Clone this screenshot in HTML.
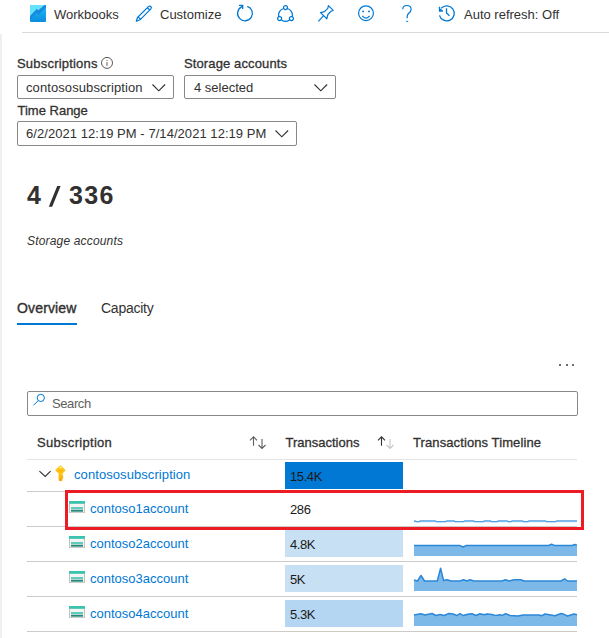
<!DOCTYPE html>
<html><head><meta charset="utf-8">
<style>
*{margin:0;padding:0;box-sizing:border-box}
html,body{width:609px;height:638px;overflow:hidden;background:#fff}
body{position:relative;font-family:"Liberation Sans",sans-serif;color:#323130}
.a{position:absolute;white-space:nowrap;line-height:1}
.t13{font-size:13px}
.b12{font-size:13px;-webkit-text-stroke:0.3px currentColor}
svg{position:absolute;overflow:visible}
.dd{position:absolute;border:1px solid #8a8886;border-radius:2px;height:24px}
.sep{position:absolute;left:27px;width:550px;height:1px;background:#cdcbc9}
.bar{position:absolute;left:285px;width:118px;height:27px}
.lnk{color:#0078d4}
</style></head><body>

<!-- toolbar -->
<svg style="left:30px;top:5px" width="16" height="17" viewBox="0 0 16 17">
  <defs>
    <linearGradient id="wg" x1="0" y1="0" x2="0" y2="1">
      <stop offset="0" stop-color="#1cc0f4"/><stop offset="1" stop-color="#0b8ce0"/>
    </linearGradient>
  </defs>
  <rect x="0" y="0" width="16" height="17" rx="1" fill="url(#wg)"/>
  <path d="M1 0H15L8.5 5.2L6.6 4.3L0 11.2V1Z" fill="#66e3fc"/>
  <path d="M0 11.2L6.6 4.3L8.5 5.2L14.6 0H15A1 1 0 0 1 16 1V2.5L8.4 9.8L6.5 7.8L0 14.5Z" fill="#1a88df"/>
</svg>
<div class="a t13" style="left:54px;top:8px">Workbooks</div>

<svg style="left:135px;top:5px" width="18" height="17" viewBox="0 0 18 17" fill="none" stroke="#0078d4" stroke-width="1.2" stroke-linejoin="round">
  <path d="M1.3 16.3L2.5 12.5L13.4 1.6A1.7 1.7 0 0 1 15.9 3.9L5 14.8Z"/>
  <path d="M12.3 2.7L14.8 5M3.1 11.9L5.6 14.2"/>
</svg>
<div class="a t13" style="left:160px;top:8px">Customize</div>

<svg style="left:237px;top:5px" width="17" height="17" viewBox="0 0 17 17" fill="none" stroke="#0078d4" stroke-width="1.3">
  <path d="M10.3 1.36A7.4 7.4 0 1 1 4.53 1.87L5.5 0.9"/>
  <path d="M2 0.3H5.7V4"/>
</svg>

<svg style="left:277px;top:5px" width="17" height="17" viewBox="0 0 17 17" fill="none" stroke="#0078d4" stroke-width="1.2">
  <circle cx="8.5" cy="2.6" r="2"/>
  <circle cx="2.6" cy="13.6" r="2"/>
  <circle cx="14.4" cy="13.6" r="2"/>
  <path d="M6.6 3.5A7 7 0 0 0 1.7 11.8"/>
  <path d="M10.4 3.5A7 7 0 0 1 15.3 11.8"/>
  <path d="M4.5 15A7 7 0 0 0 12.5 15"/>
</svg>

<svg style="left:318px;top:5px" width="16" height="17" viewBox="0 0 16 17" fill="none" stroke="#0078d4" stroke-width="1.2" stroke-linejoin="round">
  <path d="M5.4 10.9L0.4 16.3"/>
  <path d="M10.4 0.6L15.2 5.4L13.1 6.1L9.9 9.5L8.8 13.8L2.5 7.6L6.6 6.6L9.8 3.3Z"/>
</svg>

<svg style="left:358px;top:5px" width="16" height="17" viewBox="0 0 16 17" fill="none" stroke="#0078d4" stroke-width="1.2">
  <circle cx="8" cy="8.2" r="7.4"/>
  <path d="M4.3 10.9Q8 15.3 11.7 10.9"/>
  <ellipse cx="5.1" cy="6.4" rx="1" ry="0.85" fill="#0078d4" stroke="none"/>
  <ellipse cx="11" cy="6.4" rx="1" ry="0.85" fill="#0078d4" stroke="none"/>
</svg>

<svg style="left:402px;top:5px" width="10" height="17" viewBox="0 0 10 17" fill="none" stroke="#0078d4" stroke-width="1.2">
  <path d="M0.8 4.2Q0.8 0.5 4.8 0.5Q9.1 0.5 9.1 4.2Q9.1 6.3 7 8Q5.2 9.6 5.2 11.2V13.2"/>
  <rect x="4.2" y="15.9" width="2" height="1" fill="#0078d4" stroke="none"/>
</svg>

<svg style="left:438px;top:5px" width="17" height="17" viewBox="0 0 17 17" fill="none" stroke="#0078d4" stroke-width="1.3">
  <path d="M3.25 3.25A7.5 7.5 0 1 1 1.46 10.34"/>
  <path d="M1.5 1.8V6H5M1.8 5.7L3.4 4"/>
  <path d="M8.5 3.3V7.9L11.5 10.7"/>
</svg>
<div class="a t13" style="left:464px;top:8px">Auto refresh: Off</div>

<div style="position:absolute;left:22px;top:32px;width:587px;height:1px;background:#d9d9d9"></div>
<div style="position:absolute;left:0;top:34px;width:2px;height:604px;background:#efefef"></div>

<!-- params -->
<div class="a b12" style="left:17px;top:57px;letter-spacing:0.2px">Subscriptions</div>
<svg style="left:100px;top:56px" width="14" height="14" viewBox="0 0 14 14" fill="none" stroke="#5a5856" stroke-width="1">
  <circle cx="7" cy="6.9" r="5.5"/>
  <path d="M7 6.1V9.8"/>
  <circle cx="7" cy="4.5" r="0.6" fill="#5a5856" stroke="none"/>
</svg>
<div class="dd" style="left:17px;top:75px;width:157px"></div>
<div class="a t13" style="left:26px;top:81px;letter-spacing:0.09px">contososubscription</div>
<svg style="left:151.6px;top:83.9px" width="14" height="8" viewBox="0 0 14 8" fill="none" stroke="#323130" stroke-width="1.15"><path d="M0.5 0.5L6.8 6.8L13.1 0.5"/></svg>

<div class="a b12" style="left:184px;top:57px;letter-spacing:0.12px">Storage accounts</div>
<div class="dd" style="left:184px;top:75px;width:152px"></div>
<div class="a t13" style="left:194px;top:81px">4 selected</div>
<svg style="left:313.6px;top:83.9px" width="14" height="8" viewBox="0 0 14 8" fill="none" stroke="#323130" stroke-width="1.15"><path d="M0.5 0.5L6.8 6.8L13.1 0.5"/></svg>

<div class="a b12" style="left:17.5px;top:104px">Time Range</div>
<div class="dd" style="left:17px;top:121px;width:280px;height:25px"></div>
<div class="a t13" style="left:26px;top:127px;letter-spacing:0.05px">6/2/2021 12:19 PM - 7/14/2021 12:19 PM</div>
<svg style="left:274.6px;top:129.9px" width="14" height="8" viewBox="0 0 14 8" fill="none" stroke="#323130" stroke-width="1.15"><path d="M0.5 0.5L6.8 6.8L13.1 0.5"/></svg>

<!-- big number -->
<div class="a" style="left:27px;top:183px;font-size:25px;font-weight:bold">4</div>
<svg style="left:0;top:0" width="609" height="638"><path d="M48.8 206.8H52.2L60.6 185.9H57.2Z" fill="#323130"/></svg>
<div class="a" style="left:69px;top:183px;font-size:25px;font-weight:bold;letter-spacing:1.3px">336</div>
<div class="a" style="left:27px;top:235px;font-size:12px;font-style:italic;letter-spacing:0.17px">Storage accounts</div>

<!-- tabs -->
<div class="a" style="left:17px;top:301px;font-size:14px;-webkit-text-stroke:0.4px currentColor;letter-spacing:0.15px">Overview</div>
<div style="position:absolute;left:17px;top:323px;width:60px;height:2px;background:#0078d4"></div>
<div class="a" style="left:101px;top:301px;font-size:14px;letter-spacing:-0.25px">Capacity</div>

<!-- dots -->
<div style="position:absolute;left:559px;top:364px;width:2px;height:2px;background:#6e6c6a"></div>
<div style="position:absolute;left:566px;top:364px;width:2px;height:2px;background:#6e6c6a"></div>
<div style="position:absolute;left:572px;top:364px;width:2px;height:2px;background:#6e6c6a"></div>

<!-- search -->
<div class="dd" style="left:27px;top:391px;width:551px;height:25px"></div>
<svg style="left:33px;top:393px" width="12" height="14" viewBox="0 0 12 14" fill="none" stroke="#0078d4" stroke-width="1">
  <circle cx="7.8" cy="4.9" r="3.6"/>
  <path d="M5.2 7.6L0.6 12.3"/>
</svg>
<div class="a t13" style="left:52px;top:397px;color:#605e5c;letter-spacing:-0.4px">Search</div>

<!-- header -->
<div class="a b12" style="left:37px;top:436px;letter-spacing:0.3px">Subscription</div>
<div class="a b12" style="left:285.5px;top:436px">Transactions</div>
<div class="a b12" style="left:413px;top:436px;letter-spacing:0.1px">Transactions Timeline</div>

<!-- sort arrows -->
<svg style="left:249px;top:436px" width="18" height="13" viewBox="0 0 18 13" fill="none" stroke="#605e5c" stroke-width="1.1">
  <path d="M4.5 0.8V9.8M1 4.3L4.5 0.8L8 4.3"/>
  <path d="M13 3V12.5M9.5 9L13 12.5L16.5 9"/>
</svg>
<svg style="left:377px;top:436px" width="18" height="13" viewBox="0 0 18 13" fill="none" stroke-width="1.1">
  <path d="M4.5 0.8V9.8M1 4.3L4.5 0.8L8 4.3" stroke="#323130"/>
  <path d="M13 3V12.5M9.5 9L13 12.5L16.5 9" stroke="#c8c6c4"/>
</svg>

<div class="sep" style="top:459px;background:#e6e4e2"></div>
<div class="sep" style="top:491px"></div>
<div class="sep" style="top:526px"></div>
<div class="sep" style="top:561px"></div>
<div class="sep" style="top:596px"></div>
<div class="sep" style="top:631px"></div>

<!-- row A -->
<svg style="left:39px;top:470px" width="13" height="8" viewBox="0 0 13 8" fill="none" stroke="#323130" stroke-width="1.1"><path d="M0.4 1.2L6.2 6.5L11.6 1.2"/></svg>
<svg style="left:55px;top:465px" width="11" height="16" viewBox="0 0 11 16">
  <defs><linearGradient id="kg" x1="0" y1="0" x2="0" y2="1"><stop offset="0" stop-color="#ffcc22"/><stop offset="0.55" stop-color="#ffc20f"/><stop offset="1" stop-color="#f9a600"/></linearGradient></defs>
  <path d="M5.4 1.1L9.8 5.2L6.9 8.3V10.4L7.7 11L6.9 11.7L7.7 12.4L6.9 13.1V15L5.5 15.6L4.3 15V8.3L1 5.2Z" fill="url(#kg)" stroke="url(#kg)" stroke-width="1.3" stroke-linejoin="round"/>
  <circle cx="5.4" cy="2.5" r="0.85" fill="#fff6d8"/>
  <rect x="3.2" y="5" width="4.6" height="1.3" fill="#f6a500" opacity="0.5"/>
</svg>
<div class="a t13 lnk" style="left:74px;top:468px;letter-spacing:0.08px">contososubscription</div>
<div class="bar" style="top:462px;background:#0078d4"></div>
<div class="a t13" style="left:290px;top:470px;color:#1b1a19;letter-spacing:-0.4px">15.4K</div>

<svg style="left:69px;top:501px" width="16" height="12" viewBox="0 0 16 12">
  <rect x="0" y="2.5" width="16" height="9.5" fill="#c4c2c0"/>
  <rect x="1" y="2.5" width="14" height="8.7" fill="#f4f4f4"/>
  <rect x="0" y="0" width="16" height="2.8" fill="#3bc3ae"/>
  <rect x="2" y="6.2" width="12" height="1.6" fill="#3bc3ae"/>
  <rect x="2" y="8.7" width="12" height="2" fill="#258a7c"/>
</svg>
<div class="a t13 lnk" style="left:90px;top:502px">contoso1account</div>
<div class="a t13" style="left:290px;top:503px;color:#1b1a19;letter-spacing:-0.4px">286</div>
<svg style="left:69px;top:536px" width="16" height="12" viewBox="0 0 16 12">
  <rect x="0" y="2.5" width="16" height="9.5" fill="#c4c2c0"/>
  <rect x="1" y="2.5" width="14" height="8.7" fill="#f4f4f4"/>
  <rect x="0" y="0" width="16" height="2.8" fill="#3bc3ae"/>
  <rect x="2" y="6.2" width="12" height="1.6" fill="#3bc3ae"/>
  <rect x="2" y="8.7" width="12" height="2" fill="#258a7c"/>
</svg>
<div class="a t13 lnk" style="left:90px;top:537px">contoso2account</div>
<div class="bar" style="top:530px;background:#c7e0f4"></div>
<div class="a t13" style="left:290px;top:538px;color:#1b1a19;letter-spacing:-0.4px">4.8K</div>
<svg style="left:69px;top:571px" width="16" height="12" viewBox="0 0 16 12">
  <rect x="0" y="2.5" width="16" height="9.5" fill="#c4c2c0"/>
  <rect x="1" y="2.5" width="14" height="8.7" fill="#f4f4f4"/>
  <rect x="0" y="0" width="16" height="2.8" fill="#3bc3ae"/>
  <rect x="2" y="6.2" width="12" height="1.6" fill="#3bc3ae"/>
  <rect x="2" y="8.7" width="12" height="2" fill="#258a7c"/>
</svg>
<div class="a t13 lnk" style="left:90px;top:572px">contoso3account</div>
<div class="bar" style="top:565px;background:#c7e0f4"></div>
<div class="a t13" style="left:290px;top:573px;color:#1b1a19;letter-spacing:-0.4px">5K</div>
<svg style="left:69px;top:606px" width="16" height="12" viewBox="0 0 16 12">
  <rect x="0" y="2.5" width="16" height="9.5" fill="#c4c2c0"/>
  <rect x="1" y="2.5" width="14" height="8.7" fill="#f4f4f4"/>
  <rect x="0" y="0" width="16" height="2.8" fill="#3bc3ae"/>
  <rect x="2" y="6.2" width="12" height="1.6" fill="#3bc3ae"/>
  <rect x="2" y="8.7" width="12" height="2" fill="#258a7c"/>
</svg>
<div class="a t13 lnk" style="left:90px;top:607px">contoso4account</div>
<div class="bar" style="top:600px;background:#b4d6f2"></div>
<div class="a t13" style="left:290px;top:608px;color:#1b1a19;letter-spacing:-0.4px">5.3K</div>

<!-- sparklines -->
<svg style="left:0;top:0" width="609" height="638" viewBox="0 0 609 638">
<path d="M414.0,521.3 L414.8,520.9 L416.3,521.6 L418.9,521.6 L420.4,520.9 L435.0,520.9 L436.5,521.6 L445.5,521.6 L447.0,520.9 L453.9,520.9 L455.4,521.6 L463.5,521.6 L465.0,520.9 L473.4,520.9 L474.9,521.6 L483.1,521.6 L484.6,520.9 L490.0,520.9 L491.5,521.6 L497.0,521.6 L498.5,520.9 L506.9,520.9 L508.4,521.6 L510.9,521.6 L512.4,520.9 L522.2,520.9 L523.7,521.6 L527.7,521.6 L529.2,520.9 L545.2,520.9 L546.7,521.6 L555.6,521.6 L557.1,520.9 L577.0,520.9 L577,522.3 L414,522.3 Z" fill="#b5d8f3" stroke="none"/>
<path d="M414.0,521.3 L414.8,520.9 L416.3,521.6 L418.9,521.6 L420.4,520.9 L435.0,520.9 L436.5,521.6 L445.5,521.6 L447.0,520.9 L453.9,520.9 L455.4,521.6 L463.5,521.6 L465.0,520.9 L473.4,520.9 L474.9,521.6 L483.1,521.6 L484.6,520.9 L490.0,520.9 L491.5,521.6 L497.0,521.6 L498.5,520.9 L506.9,520.9 L508.4,521.6 L510.9,521.6 L512.4,520.9 L522.2,520.9 L523.7,521.6 L527.7,521.6 L529.2,520.9 L545.2,520.9 L546.7,521.6 L555.6,521.6 L557.1,520.9 L577.0,520.9" fill="none" stroke="#4f9fe4" stroke-width="1.2" stroke-linejoin="round"/>
<path d="M414,545.6 L460,545.6 L463,547 L466,545.6 L548,545.6 L551.5,544.3 L555,545.6 L572,545.6 L574.5,544.5 L577,545.3 L577,556 L414,556 Z" fill="#7db9e8" stroke="none"/>
<path d="M414,545.6 L460,545.6 L463,547 L466,545.6 L548,545.6 L551.5,544.3 L555,545.6 L572,545.6 L574.5,544.5 L577,545.3" fill="none" stroke="#2b88d8" stroke-width="1.5" stroke-linejoin="round"/>
<path d="M414,580 L417.5,581 L421,575.5 L424.5,581 L437.3,581 L440.6,568.3 L443.6,580.6 L447,579.8 L451,581 L460,581 L463.5,579.7 L467,581 L470,579.7 L474,581 L502,581 L505.6,579.7 L509,581 L514,579.8 L521,579.8 L524,581 L561,581 L564.7,578.9 L567.5,581 L577,581 L577,591 L414,591 Z" fill="#7db9e8" stroke="none"/>
<path d="M414,580 L417.5,581 L421,575.5 L424.5,581 L437.3,581 L440.6,568.3 L443.6,580.6 L447,579.8 L451,581 L460,581 L463.5,579.7 L467,581 L470,579.7 L474,581 L502,581 L505.6,579.7 L509,581 L514,579.8 L521,579.8 L524,581 L561,581 L564.7,578.9 L567.5,581 L577,581" fill="none" stroke="#2b88d8" stroke-width="1.5" stroke-linejoin="round"/>
<path d="M414,615 L421,613.8 L425,615 L432,613.5 L436,615.5 L440,614.5 L444,615.5 L449,613.5 L453,614 L457,615.5 L460,613.5 L463,615.5 L469,614 L472,613.8 L476,615.5 L480,613.8 L484,614.8 L487,614 L492,614.5 L496,615.6 L500,614.8 L502,615.4 L505.6,613.8 L510,615.4 L518,616 L523,614.9 L539,615 L542,615.7 L545,614 L555,615.8 L561,613.5 L564,614.3 L567.5,616 L574,614 L577,614.8 L577,626 L414,626 Z" fill="#7db9e8" stroke="none"/>
<path d="M414,615 L421,613.8 L425,615 L432,613.5 L436,615.5 L440,614.5 L444,615.5 L449,613.5 L453,614 L457,615.5 L460,613.5 L463,615.5 L469,614 L472,613.8 L476,615.5 L480,613.8 L484,614.8 L487,614 L492,614.5 L496,615.6 L500,614.8 L502,615.4 L505.6,613.8 L510,615.4 L518,616 L523,614.9 L539,615 L542,615.7 L545,614 L555,615.8 L561,613.5 L564,614.3 L567.5,616 L574,614 L577,614.8" fill="none" stroke="#2b88d8" stroke-width="1.5" stroke-linejoin="round"/>
</svg>
<!-- red box -->
<div style="position:absolute;left:65px;top:490px;width:519px;height:40px;border:3px solid #ed1c24"></div>
</body></html>
